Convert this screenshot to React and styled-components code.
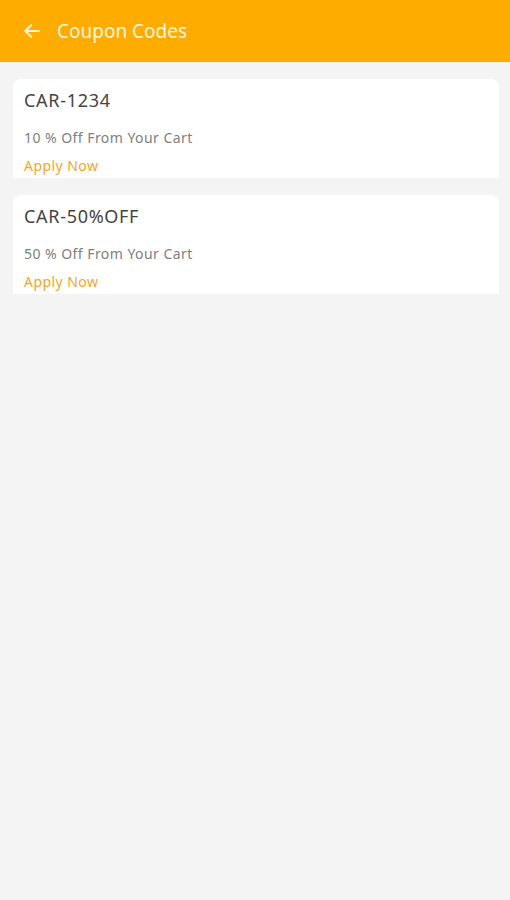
import React from "react";
import styled, { createGlobalStyle } from "styled-components";

const Global = createGlobalStyle`
  html, body { margin: 0; padding: 0; background: #f4f4f4; }
  body { font-family: "Noto Sans", "Open Sans", sans-serif; }
`;

const Page = styled.div`
  min-height: 900px;
  background: #f4f4f4;
`;

const Header = styled.header`
  height: 62px;
  background: #ffac00;
  display: flex;
  align-items: center;
  padding: 0 0 0 22px;
  gap: 15px;
  box-sizing: border-box;
`;

const Title = styled.h1`
  margin: 0;
  font-size: 19px;
  font-weight: 400;
  color: #fff4dc;
`;

const List = styled.div`
  display: flex;
  flex-direction: column;
  gap: 17px;
  padding: 17px 11px 0 13px;
`;

const Card = styled.div`
  background: #fff;
  border-radius: 7px 7px 0 0;
  height: 99px;
  box-sizing: border-box;
  padding: 9px 11px 0 11px;
  display: flex;
  flex-direction: column;
`;

const Code = styled.div`
  font-size: 18px;
  letter-spacing: 0.7px;
  color: #444;
  line-height: 24px;
`;

const Desc = styled.div`
  margin-top: 16px;
  font-size: 14px;
  letter-spacing: 0.45px;
  color: #808080;
  line-height: 20px;
`;

const Apply = styled.div`
  margin-top: 8px;
  font-size: 14px;
  letter-spacing: 0.45px;
  color: #f5a623;
  line-height: 20px;
`;

const coupons = [
  { code: "CAR-1234", desc: "10 % Off From Your Cart" },
  { code: "CAR-50%OFF", desc: "50 % Off From Your Cart" },
];

export default function App() {
  return (
    <Page>
      <Global />
      <Header>
        <svg width="20" height="20" viewBox="0 0 24 24" fill="none" stroke="#fff4dc" strokeWidth="2.6" strokeLinecap="round" strokeLinejoin="round">
          <path d="M20 12H5" />
          <path d="M11 5l-7 7 7 7" />
        </svg>
        <Title>Coupon Codes</Title>
      </Header>
      <List>
        {coupons.map((c) => (
          <Card key={c.code}>
            <Code>{c.code}</Code>
            <Desc>{c.desc}</Desc>
            <Apply>Apply Now</Apply>
          </Card>
        ))}
      </List>
    </Page>
  );
}
